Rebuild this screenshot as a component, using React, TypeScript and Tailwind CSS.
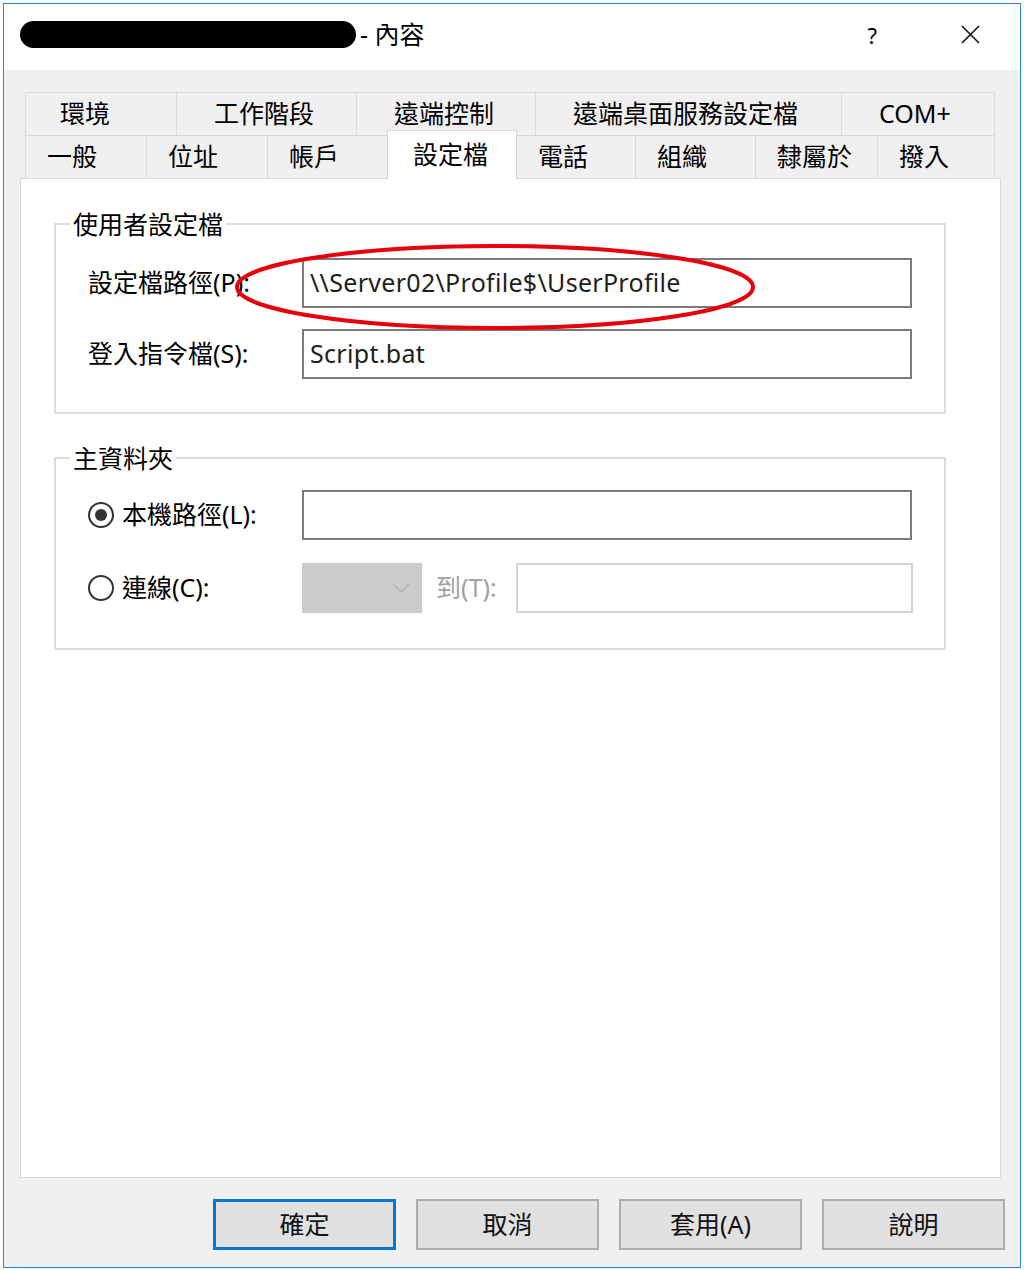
import { FC } from "react";

const row1 = [
  { label: "環境", w: "w-[152px]" },
  { label: "工作階段", w: "w-[180px]" },
  { label: "遠端控制", w: "w-[179px]" },
  { label: "遠端桌面服務設定檔", w: "w-[306px]" },
  { label: "COM+", w: "w-[153px]" },
];

const row2 = [
  { label: "一般", w: "w-[122px]" },
  { label: "位址", w: "w-[121px]" },
  { label: "帳戶", w: "w-[120px]" },
  { label: "設定檔", w: "w-[130px]", active: true },
  { label: "電話", w: "w-[119px]" },
  { label: "組織", w: "w-[120px]" },
  { label: "隸屬於", w: "w-[122px]" },
  { label: "撥入", w: "w-[117px]" },
];

const Radio: FC<{ checked?: boolean }> = ({ checked }) => (
  <span className="w-[26px] h-[26px] rounded-full border-2 border-[#333] bg-white flex items-center justify-center shrink-0">
    {checked && <span className="w-[12px] h-[12px] rounded-full bg-[#333]" />}
  </span>
);

const Btn: FC<{ label: string; primary?: boolean }> = ({ label, primary }) => (
  <button
    className={
      primary
        ? "w-[183px] h-[51px] bg-[#e1e1e1] border-[3px] border-[#0078d7] text-[25px] text-[#111]"
        : "w-[183px] h-[51px] bg-[#e1e1e1] border-2 border-[#adadad] text-[25px] text-[#111]"
    }
  >
    {label}
  </button>
);

const App: FC = () => {
  return (
    <div className="relative w-[1024px] h-[1270px] bg-white pl-[3px] pt-[3px] font-['Noto_Sans','Noto_Sans_CJK_TC',sans-serif] text-black">
      <div className="w-[1018px] h-[1265px] border border-[#2a86d8] flex flex-col">
        {/* title bar */}
        <div className="h-[66px] bg-white flex items-center pl-[16px] pr-[40px] pb-[5px] shrink-0">
          <div className="w-[336px] h-[27px] rounded-full bg-black" />
          <span className="ml-[4px] text-[25px] leading-none">- 內容</span>
          <span className="ml-auto text-[22px] leading-none">?</span>
          <svg className="ml-[84px]" width="19" height="19" viewBox="0 0 19 19">
            <path d="M1 1 L18 18 M18 1 L1 18" stroke="#111" strokeWidth="1.6" />
          </svg>
        </div>

        {/* body */}
        <div className="flex-1 bg-[#f0f0f0] flex flex-col pt-[22px]">
          <div className="pl-[21px]">
            <div className="flex h-[43px]">
              {row1.map((t, i) => (
                <div
                  key={t.label}
                  className={`${t.w} h-full flex items-center border-t border-r border-[#d9d9d9] text-[25px] ${
                    i === 0 ? "border-l pl-[34px]" : "pl-[37px]"
                  }`}
                >
                  {t.label}
                </div>
              ))}
            </div>
            <div className="flex h-[43px] items-end">
              {row2.map((t, i) =>
                t.active ? (
                  <div
                    key={t.label}
                    className={`${t.w} -ml-px h-[49px] -mb-px relative z-10 bg-white border-t border-l border-r border-[#d9d9d9] flex items-center pl-[25px] text-[25px]`}
                  >
                    {t.label}
                  </div>
                ) : (
                  <div
                    key={t.label}
                    className={`${t.w} h-full flex items-center border-t border-r border-[#d9d9d9] pl-[21px] text-[25px] ${
                      i === 0 ? "border-l" : ""
                    }`}
                  >
                    {t.label}
                  </div>
                )
              )}
            </div>
          </div>

          {/* panel */}
          <div className="ml-[16px] w-[981px] flex-1 bg-white border border-[#d9d9d9] pt-[28px] pl-[33px]">
            <fieldset className="w-[892px] border-2 border-[#dcdcdc] pb-[33px]">
              <legend className="ml-[14px] px-[3px] text-[25px] leading-[34px]">使用者設定檔</legend>
              <div className="pt-[17px] pl-[32px] flex flex-col gap-[21px]">
                <div className="flex items-center">
                  <span className="w-[214px] text-[25px]">設定檔路徑(P):</span>
                  <div className="w-[610px] h-[50px] border-2 border-[#7a7a7a] flex items-center pl-[6px] text-[25px] tracking-[0.3px] text-[#1e1e1e]">
                    \\Server02\Profile$\UserProfile
                  </div>
                </div>
                <div className="flex items-center">
                  <span className="w-[214px] text-[25px]">登入指令檔(S):</span>
                  <div className="w-[610px] h-[50px] border-2 border-[#7a7a7a] flex items-center pl-[6px] text-[25px] tracking-[0.3px] text-[#1e1e1e]">
                    Script.bat
                  </div>
                </div>
              </div>
            </fieldset>

            <fieldset className="mt-[27px] w-[892px] border-2 border-[#dcdcdc] pb-[35px]">
              <legend className="ml-[14px] px-[3px] text-[25px] leading-[34px]">主資料夾</legend>
              <div className="pt-[15px] pl-[32px] flex flex-col gap-[23px]">
                <div className="flex items-center">
                  <div className="w-[214px] flex items-center gap-[8px] text-[25px]">
                    <Radio checked />
                    <span>本機路徑(L):</span>
                  </div>
                  <div className="w-[610px] h-[50px] border-2 border-[#7a7a7a]" />
                </div>
                <div className="flex items-center">
                  <div className="w-[214px] flex items-center gap-[8px] text-[25px]">
                    <Radio />
                    <span>連線(C):</span>
                  </div>
                  <div className="w-[120px] h-[50px] bg-[#cccccc] border-2 border-[#cccccc] flex items-center justify-end pr-[10px]">
                    <svg width="18" height="10" viewBox="0 0 18 10">
                      <path d="M1 1 L9 9 L17 1" stroke="#b3b3b3" strokeWidth="1.6" fill="none" />
                    </svg>
                  </div>
                  <span className="w-[94px] pl-[14px] text-[25px] text-[#a0a0a0]">到(T):</span>
                  <div className="w-[397px] h-[50px] border-2 border-[#d5d5d5] bg-white" />
                </div>
              </div>
            </fieldset>
          </div>

          {/* buttons */}
          <div className="flex justify-end gap-[20px] pt-[21px] pb-[17px] pr-[15px]">
            <Btn label="確定" primary />
            <Btn label="取消" />
            <Btn label="套用(A)" />
            <Btn label="說明" />
          </div>
        </div>
      </div>

      {/* red annotation ellipse */}
      <svg className="absolute left-[233px] top-[242px] pointer-events-none" width="524" height="90" viewBox="0 0 524 90">
        <ellipse cx="262" cy="45" rx="258" ry="41" stroke="#e8000b" strokeWidth="4" fill="none" />
      </svg>
    </div>
  );
};

export default App;
